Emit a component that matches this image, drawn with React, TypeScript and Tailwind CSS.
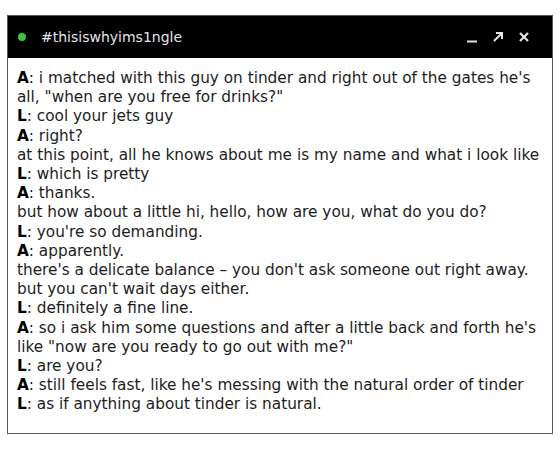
const lines: [string | null, string][] = [
  ['A', ': i matched with this guy on tinder and right out of the gates he\'s'],
  [null, 'all, "when are you free for drinks?"'],
  ['L', ': cool your jets guy'],
  ['A', ': right?'],
  [null, 'at this point, all he knows about me is my name and what i look like'],
  ['L', ': which is pretty'],
  ['A', ': thanks.'],
  [null, 'but how about a little hi, hello, how are you, what do you do?'],
  ['L', ': you\'re so demanding.'],
  ['A', ': apparently.'],
  [null, 'there\'s a delicate balance \u2013 you don\'t ask someone out right away.'],
  [null, 'but you can\'t wait days either.'],
  ['L', ': definitely a fine line.'],
  ['A', ': so i ask him some questions and after a little back and forth he\'s'],
  [null, 'like "now are you ready to go out with me?"'],
  ['L', ': are you?'],
  ['A', ': still feels fast, like he\'s messing with the natural order of tinder'],
  ['L', ': as if anything about tinder is natural.'],
];

export default function App() {
  return (
    <div className="w-[560px] h-[451px] bg-white pt-[15px] pl-[7px]" style={{ fontFamily: '"DejaVu Sans", sans-serif' }}>
      <div className="w-[546px] h-[419px] border border-[#555] flex flex-col">
        <div className="h-[42px] bg-black flex items-center pl-[10px] pr-[22px] shrink-0">
          <span className="w-[8px] h-[8px] rounded-full bg-[#3ec43e]" />
          <span className="ml-[15px] text-[14px] text-[#e4e4e4]">#thisiswhyims1ngle</span>
          <div className="ml-auto flex items-center gap-[14px] text-[#e4e4e4]">
            <svg width="12" height="12" viewBox="0 0 12 12"><path d="M1 10.5h10" stroke="currentColor" strokeWidth="2" /></svg>
            <svg width="12" height="12" viewBox="0 0 12 12" fill="none" stroke="currentColor" strokeWidth="2"><path d="M2 10L10 2M4 2h6v6" /></svg>
            <svg width="12" height="12" viewBox="0 0 12 12" fill="none" stroke="currentColor" strokeWidth="2.2"><path d="M2 2l8 8M10 2l-8 8" /></svg>
          </div>
        </div>
        <div className="pt-[11px] pl-[9px] text-[15.3px] leading-[19.2px] text-[#1c1c1c]">
          {lines.map(([who, text], i) => (
            <div key={i} className="whitespace-nowrap">
              {who && <b className="font-bold text-black">{who}</b>}
              {text}
            </div>
          ))}
        </div>
      </div>
    </div>
  );
}
